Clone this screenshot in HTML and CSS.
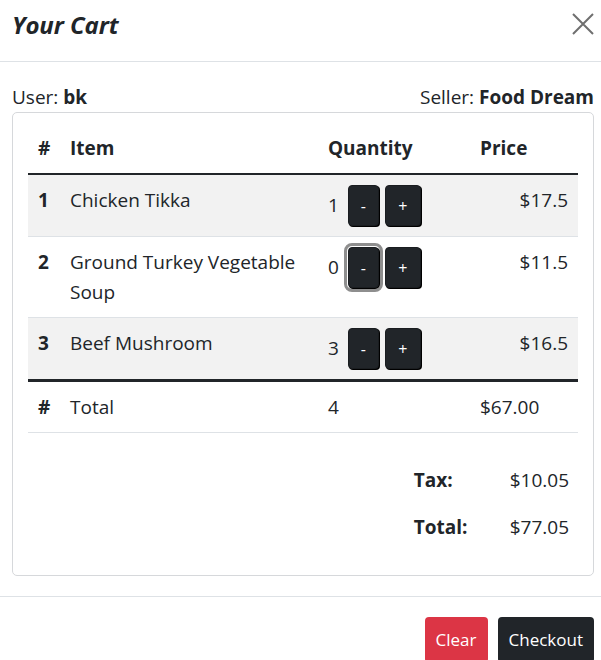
FILE: index.html
```html
<!DOCTYPE html>
<html lang="en">
<head>
<meta charset="utf-8">
<title>Your Cart</title>
<link rel="stylesheet" href="styles.css">
</head>
<body>
<div class="modal">
  <header class="modal-header">
    <h1 class="modal-title">Your Cart</h1>
    <button class="btn-close" aria-label="Close">
      <svg width="22" height="22" viewBox="0 0 22 22"><path d="M1 1 L21 21 M21 1 L1 21" stroke="#6f6f6f" stroke-width="2" fill="none"/></svg>
    </button>
  </header>
  <div class="modal-body">
    <div class="meta">
      <span>User: <b>bk</b></span>
      <span>Seller: <b>Food Dream</b></span>
    </div>
    <div class="card">
      <table class="cart">
        <colgroup><col class="c-num"><col class="c-item"><col class="c-qty"><col class="c-price"></colgroup>
        <thead>
          <tr><th>#</th><th>Item</th><th>Quantity</th><th>Price</th></tr>
        </thead>
        <tbody>
          <tr class="striped">
            <th>1</th><td>Chicken Tikka</td>
            <td class="qty">1 <button class="qbtn minus">-</button><button class="qbtn plus">+</button></td>
            <td class="price">$17.5</td>
          </tr>
          <tr>
            <th>2</th><td>Ground Turkey Vegetable Soup</td>
            <td class="qty">0 <button class="qbtn minus focus">-</button><button class="qbtn plus">+</button></td>
            <td class="price">$11.5</td>
          </tr>
          <tr class="striped">
            <th>3</th><td>Beef Mushroom</td>
            <td class="qty">3 <button class="qbtn minus">-</button><button class="qbtn plus">+</button></td>
            <td class="price">$16.5</td>
          </tr>
        </tbody>
        <tfoot>
          <tr><th>#</th><td>Total</td><td>4</td><td>$67.00</td></tr>
        </tfoot>
      </table>
      <table class="summary">
        <tr><th>Tax:</th><td>$10.05</td></tr>
        <tr><th>Total:</th><td>$77.05</td></tr>
      </table>
    </div>
  </div>
  <footer class="modal-footer">
    <button class="btn btn-danger">Clear</button>
    <button class="btn btn-dark">Checkout</button>
  </footer>
</div>
</body>
</html>
```

FILE: styles.css
```css
html, body {
  margin: 0;
  padding: 0;
  background: #fff;
}
body {
  font-family: "Open Sans", "Noto Sans", sans-serif;
  font-size: 19px;
  line-height: 30px;
  color: #212529;
  overflow: hidden;
}
.modal {
  width: 601px;
}
.modal-header {
  display: flex;
  align-items: center;
  justify-content: space-between;
  height: 62px;
  padding: 0 7px 0 12px;
  border-bottom: 1px solid #dee2e6;
  box-sizing: border-box;
}
.modal-title {
  margin: 0;
  font-size: 24px;
  font-weight: 700;
  font-style: italic;
  line-height: 30px;
  letter-spacing: -0.1px;
  padding-bottom: 12px;
}
.btn-close {
  border: 0;
  background: transparent;
  padding: 0;
  width: 22px;
  height: 22px;
  display: flex;
  margin-bottom: 14px;
}
.modal-body {
  padding: 20px 7px 20px 12px;
  border-bottom: 1px solid #dee2e6;
}
.meta {
  display: flex;
  justify-content: space-between;
  line-height: 30px;
}
.meta b { font-weight: 700; }
.card {
  border: 1px solid #d6d8db;
  border-radius: 5px;
  padding: 15px;
  box-sizing: border-box;
  height: 464px;
}
.cart {
  width: 100%;
  border-collapse: collapse;
  table-layout: fixed;
}
.c-num { width: 32px; }
.c-item { width: 258px; }
.c-qty { width: 152px; }
.c-price { width: 108px; }
.cart th, .cart td {
  text-align: left;
  vertical-align: top;
  padding: 10px;
  border-bottom: 1px solid #dee2e6;
}
.cart thead th {
  padding: 5px 10px 10px;
  border-bottom: 2px solid #212529;
  font-weight: 700;
}
.cart tbody tr:last-child th, .cart tbody tr:last-child td {
  border-bottom: 0;
}
.cart tfoot th, .cart tfoot td {
  border-top: 3px solid #212529;
  font-weight: 400;
}
.cart tfoot th { font-weight: 700; }
.cart tbody th { font-weight: 700; }
.striped th, .striped td { background: #f2f2f2; }
.cart td.price { text-align: right; }
.qty { white-space: nowrap; }
.qbtn {
  display: inline-block;
  font-family: inherit;
  font-size: 16px;
  line-height: 24px;
  height: 41px;
  padding: 0;
  color: #fff;
  background: #212529;
  border: 1px solid #1a1d20;
  border-radius: 4px;
  box-shadow: 1px 1px 0 #000;
  vertical-align: baseline;
}
.qbtn.minus { width: 31px; margin-left: 4px; }
.qbtn.plus { width: 36px; margin-left: 6px; }
.qbtn.focus {
  outline: 3px solid #8e8e8e;
  outline-offset: 1px;
}
.summary {
  margin: 24px 0 0 auto;
  border-collapse: collapse;
}
.summary th, .summary td {
  text-align: left;
  padding: 8px 9px 9px 10px;
  height: 30px;
}
.summary th { width: 77px; font-weight: 700; }
.summary td { width: 57px; }
.modal-footer {
  display: flex;
  justify-content: flex-end;
  gap: 10px;
  padding: 20px 7px 0 12px;
}
.btn {
  font-family: inherit;
  font-size: 17px;
  line-height: 30px;
  padding: 8px 11px;
  color: #fff;
  border: 0;
  border-radius: 4px;
}
.btn-danger { background: #dc3545; }
.btn-dark { background: #212529; }
```
